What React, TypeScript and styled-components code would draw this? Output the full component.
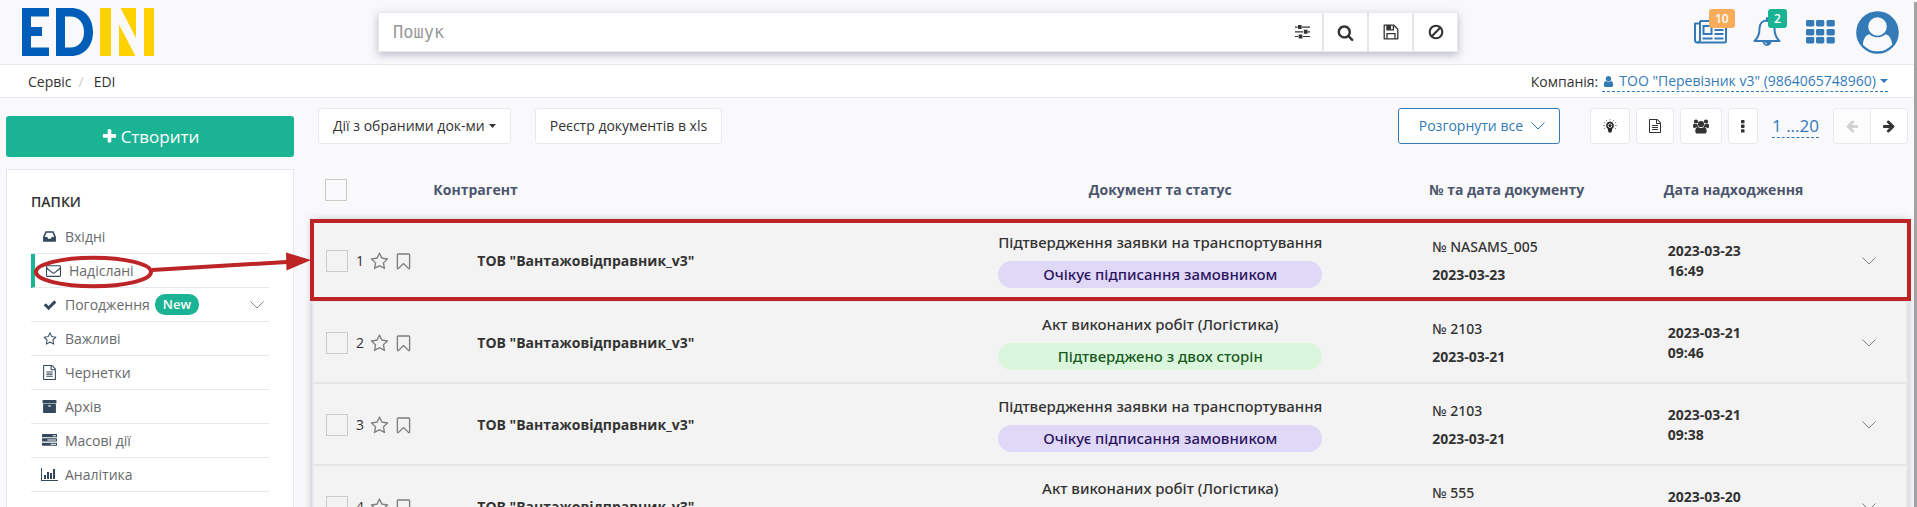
import React from "react";
import styled, { createGlobalStyle, css } from "styled-components";

const GlobalStyle = createGlobalStyle`
  * { box-sizing: border-box; }
  body {
    margin: 0;
    background: #f9f9fb;
    color: #333;
    font-family: "Open Sans", "Noto Sans", sans-serif;
    font-size: 14px;
    line-height: 20px;
  }
  button, input { font: inherit; color: inherit; }
`;

const BLUE = "#337ab7";
const GREEN = "#1ab394";
const LINE = "#e7e9ed";
const RED = "#bd2426";

/* ---------- icons ---------- */

const faPaths = {
  plus: "M1600 736v192q0 40-28 68t-68 28h-416v416q0 40-28 68t-68 28h-192q-40 0-68-28t-28-68v-416h-416q-40 0-68-28t-28-68v-192q0-40 28-68t68-28h416v-416q0-40 28-68t68-28h192q40 0 68 28t28 68v416h416q40 0 68 28t28 68z",
  star: "M1201 1004l306-297-422-62-189-382-189 382-422 62 306 297-73 421 378-199 377 199zm527-357q0 22-26 48l-363 354 86 500q1 7 1 20 0 50-41 50-19 0-40-12l-449-236-449 236q-22 12-40 12-21 0-31.5-14.5t-10.5-35.5q0-6 2-20l86-500-364-354q-25-27-25-48 0-37 56-46l502-73 225-455q19-41 49-41t49 41l225 455 502 73q56 9 56 46z",
  bookmark: "M1408 256h-1024v1242l423-406 89-85 89 85 423 406v-1242zm12-128q23 0 44 9 33 13 52.5 41t19.5 62v1289q0 34-19.5 62t-52.5 41q-19 8-44 8-48 0-83-32l-441-424-441 424q-36 33-83 33-23 0-44-9-33-13-52.5-41t-19.5-62v-1289q0-34 19.5-62t52.5-41q21-9 44-9h1048z",
  inbox: "M1151 960h316q-1-3-2.5-8t-2.5-8l-212-496h-708l-212 496q-1 2-2.5 8t-2.5 8h316l95 192h320zm513 30v482q0 26-19 45t-45 19h-1408q-26 0-45-19t-19-45v-482q0-62 25-123l238-552q10-25 36.5-42t52.5-17h832q26 0 52.5 17t36.5 42l238 552q25 61 25 123z",
  envelope: "M1664 1504v-768q-32 36-69 66-268 206-426 338-51 43-83 67t-86.5 48.5-102.5 24.5h-2q-48 0-102.5-24.5t-86.5-48.5-83-67q-158-132-426-338-37-30-69-66v768q0 13 9.5 22.5t22.5 9.5h1472q13 0 22.5-9.5t9.5-22.5zm0-1051v-24.5l-.5-13-3-12.5-5.5-9-9-7.5-14-2.5h-1472q-13 0-22.5 9.5t-9.5 22.5q0 168 147 284 193 152 401 317 6 5 35 29.5t46 37.5 44.5 31.5 50.5 27.5 43 9h2q20 0 43-9t50.5-27.5 44.5-31.5 46-37.5 35-29.5q208-165 401-317 54-43 100.5-115.5t46.5-131.5zm128-37v1088q0 66-47 113t-113 47h-1472q-66 0-113-47t-47-113v-1088q0-66 47-113t113-47h1472q66 0 113 47t47 113z",
  check: "M1671 566q0 40-28 68l-724 724-136 136q-28 28-68 28t-68-28l-136-136-362-362q-28-28-28-68t28-68l136-136q28-28 68-28t68 28l294 295 656-657q28-28 68-28t68 28l136 136q28 28 28 68z",
  file: "M1596 380q28 28 48 76t20 88v1152q0 40-28 68t-68 28h-1344q-40 0-68-28t-28-68v-1600q0-40 28-68t68-28h896q40 0 88 20t76 48zm-444-244v376h376q-10-29-22-41l-313-313q-12-12-41-22zm384 1528v-1024h-416q-40 0-68-28t-28-68v-416h-768v1536h1280zm-1024-864q0-14 9-23t23-9h704q14 0 23 9t9 23v64q0 14-9 23t-23 9h-704q-14 0-23-9t-9-23v-64zm736 224q14 0 23 9t9 23v64q0 14-9 23t-23 9h-704q-14 0-23-9t-9-23v-64q0-14 9-23t23-9h704zm0 256q14 0 23 9t9 23v64q0 14-9 23t-23 9h-704q-14 0-23-9t-9-23v-64q0-14 9-23t23-9h704z",
  archive: "M1088 832q0-26-19-45t-45-19h-256q-26 0-45 19t-19 45 19 45 45 19h256q26 0 45-19t19-45zm576-192v960q0 26-19 45t-45 19h-1408q-26 0-45-19t-19-45v-960q0-26 19-45t45-19h1408q26 0 45 19t19 45zm64-448v256q0 26-19 45t-45 19h-1536q-26 0-45-19t-19-45v-256q0-26 19-45t45-19h1536q26 0 45 19t19 45z",
  tasks: "M1024 1408h640v-128h-640v128zm-384-512h1024v-128h-1024v128zm640-512h384v-128h-384v128zm512 832v256q0 26-19 45t-45 19h-1664q-26 0-45-19t-19-45v-256q0-26 19-45t45-19h1664q26 0 45 19t19 45zm0-512v256q0 26-19 45t-45 19h-1664q-26 0-45-19t-19-45v-256q0-26 19-45t45-19h1664q26 0 45 19t19 45zm0-512v256q0 26-19 45t-45 19h-1664q-26 0-45-19t-19-45v-256q0-26 19-45t45-19h1664q26 0 45 19t19 45z",
  search: "M1216 832q0-185-131.5-316.5t-316.5-131.5-316.5 131.5-131.5 316.5 131.5 316.5 316.5 131.5 316.5-131.5 131.5-316.5zm512 832q0 52-38 90t-90 38q-54 0-90-38l-343-342q-179 124-399 124-143 0-273.5-55.5t-225-150-150-225-55.5-273.5 55.5-273.5 150-225 225-150 273.5-55.5 273.5 55.5 225 150 150 225 55.5 273.5q0 220-124 399l343 343q37 37 37 90z",
  user: "M1536 1399q0 109-62.5 187t-150.5 78h-854q-88 0-150.5-78t-62.5-187q0-85 8.5-160.5t31.5-152 58.5-131 94-89 134.5-34.5q131 128 313 128t313-128q76 0 134.5 34.5t94 89 58.5 131 31.5 152 8.5 160.5zm-256-887q0 159-112.5 271.5t-271.5 112.5-271.5-112.5-112.5-271.5 112.5-271.5 271.5-112.5 271.5 112.5 112.5 271.5z",
  arrow: "M1600 960q0 54-37 91l-651 651q-39 37-91 37-51 0-90-37l-75-75q-38-38-38-91t38-91l293-293h-704q-52 0-84.5-37.5t-32.5-90.5v-128q0-53 32.5-90.5t84.5-37.5h704l-293-294q-38-36-38-90t38-90l75-75q38-38 90-38 53 0 91 38l651 651q37 35 37 90z",
};

type FaName = keyof typeof faPaths;

function Fa({ name, size = 14, flip = false }: { name: FaName; size?: number; flip?: boolean }) {
  return (
    <svg width={size} height={size} viewBox="0 0 1792 1792" fill="currentColor" aria-hidden="true">
      <path d={faPaths[name]} transform={flip ? "translate(1792 0) scale(-1 1)" : undefined} />
    </svg>
  );
}

function ChartIcon() {
  return (
    <svg width="17" height="13" viewBox="0 0 17 13" fill="currentColor" aria-hidden="true">
      <path d="M0 0h1v12h16v1H0zM3 7h2v4H3zM6 4h2v7H6zM9 5h2v6H9zM12 1h2v10h-2z" />
    </svg>
  );
}

function SlidersIcon() {
  return (
    <svg width="16" height="14" viewBox="0 0 16 14" fill="currentColor" aria-hidden="true">
      <path d="M0 1.5h2.5v1.2H0zM7 1.5h8v1.2H7zM3 0h3.6v4H3zM0 6.2h8v1.2H0zM13 6.2h2v1.2h-2zM8.8 4.8h3.8v4H8.8zM0 10.9h3v1.2H0zM8 10.9h7v1.2H8zM3.6 9.5h3.8v4H3.6z" />
    </svg>
  );
}

function SaveIcon() {
  return (
    <svg width="16" height="16" viewBox="0 0 16 16" fill="none" stroke="currentColor" strokeWidth="1.3" aria-hidden="true">
      <path d="M1.2 1.2h9.6l4 4v9.6H1.2z" strokeLinejoin="round" />
      <path d="M4 1.2v4.6h6.4V1.2M4 14.8V9.7h8v5.1" />
      <path d="M4.4 1.6h3v3.6h-3z" fill="currentColor" />
    </svg>
  );
}

function BanIcon() {
  return (
    <svg width="16" height="16" viewBox="0 0 16 16" fill="none" stroke="currentColor" strokeWidth="2.1" aria-hidden="true">
      <circle cx="8" cy="8" r="6.3" />
      <path d="M12.4 3.6L3.6 12.4" />
    </svg>
  );
}

function NewsIcon() {
  return (
    <svg width="34" height="24" viewBox="0 0 34 24" fill="none" stroke="currentColor" strokeWidth="2" aria-hidden="true">
      <path d="M6 1h26v20a1.5 1.5 0 0 1-1.5 1.5H3.5A2.500 2.500 0 0 1 1 20V3.500h5" strokeLinejoin="round" />
      <path d="M6 1v19a2.400 2.400 0 0 1-2.500 2.400" />
      <path d="M9.500 6h8v8h-8zM20.500 10h9M20.500 14h9M8.500 18.500h10M20.500 18.500h9M20.500 5.500h9" />
    </svg>
  );
}

function BellIcon() {
  return (
    <svg width="28" height="30" viewBox="0 0 28 30" fill="none" stroke="currentColor" strokeWidth="2" aria-hidden="true">
      <path d="M14 3.500c-5 0-7.500 3.500-7.500 8 0 6-1.500 9.500-5 12.500h25c-3.500-3-5-6.500-5-12.500 0-4.500-2.500-8-7.500-8z" strokeLinejoin="round" />
      <path d="M14 1v3" strokeLinecap="round" />
      <path d="M9.500 24a4.500 5 0 0 0 9 0z" fill="currentColor" stroke="none" />
      <path d="M11.800 25a2.300 2.300 0 0 0 2.200 2" stroke="#f9f9fb" strokeWidth="0.7" />
    </svg>
  );
}

function GridIcon() {
  return (
    <svg width="29" height="24" viewBox="0 0 29 24" fill="currentColor" aria-hidden="true">
      {[0, 9, 17].map((y) =>
        [0, 10, 20.5].map((x) => <rect key={`${x}-${y}`} x={x} y={y} width="8.3" height="6.4" rx="1.4" />)
      )}
    </svg>
  );
}

function AvatarIcon() {
  return (
    <svg width="43" height="43" viewBox="0 0 43 43" aria-hidden="true">
      <circle cx="21.5" cy="21.5" r="21.3" fill="currentColor" />
      <path d="M6.800 33.500c.7-5.800 3-9.700 6.700-10.300 4.700 4.200 11.300 4.200 16 0 3.700.6 6 4.500 6.700 10.300A18.800 18.800 0 0 1 21.500 40.300 18.800 18.800 0 0 1 6.800 33.500z" fill="#f9f9fb" />
      <circle cx="21.5" cy="15.5" r="9.3" fill="#f9f9fb" />
    </svg>
  );
}

function BulbIcon() {
  return (
    <svg width="14" height="15" viewBox="0 0 14 15" aria-hidden="true">
      <path d="M7 2.600a4 4 0 0 0-2.300 7.200L5.600 13.500h2.800l.9-3.700A4 4 0 0 0 7 2.600z" fill="#222" />
      <circle cx="7" cy="6.6" r="1.9" fill="none" stroke="#fff" strokeWidth=".8" />
      <path d="M7 0v1.400M3.200 1l.8 1.300M10.800 1L10 2.300M.2 6.500h1.800M12 6.500h1.800M.8 3.300l1.400.8M13.200 3.300l-1.400.8M1 9.800l1.300-.8M13 9.800L11.700 9" stroke="#777" strokeWidth=".9" />
    </svg>
  );
}

function UsersIcon() {
  return (
    <svg width="16" height="15" viewBox="0 0 16 15" fill="currentColor" aria-hidden="true">
      <circle cx="3" cy="2.5" r="2.1" />
      <circle cx="13" cy="2.5" r="2.1" />
      <circle cx="8" cy="5" r="3.1" />
      <path d="M0 7.500c0-1.800.5-2.900 1.400-2.900 1 .7 2 .8 2.900.5.1 1.200.5 2.100 1.200 2.800H3.200c-.6.400-1 .8-1.300 1.300C.8 9.100 0 8.500 0 7.500zM16 7.500c0-1.800-.5-2.900-1.400-2.900-1 .7-2 .8-2.900.5-.1 1.200-.5 2.100-1.200 2.800h2.300c.6.400 1 .8 1.300 1.300 1.100-.1 1.900-.7 1.900-1.700z" />
      <path d="M2.300 12.500C2.300 9.500 3.300 8 5 8c1.900 1.200 4.100 1.200 6 0 1.700 0 2.700 1.500 2.700 4.500 0 1.300-.8 2.100-2 2.100H4.300c-1.200 0-2-.8-2-2.100z" />
    </svg>
  );
}

function DotsIcon() {
  return (
    <svg width="4" height="13" viewBox="0 0 4 13" fill="currentColor" aria-hidden="true">
      <rect width="3.5" height="3.3" rx=".6" />
      <rect y="4.6" width="3.5" height="3.3" rx=".6" />
      <rect y="9.2" width="3.5" height="3.3" rx=".6" />
    </svg>
  );
}

function Chevron() {
  return (
    <svg width="14" height="8" viewBox="0 0 14 8" fill="none" stroke="currentColor" strokeWidth="1" aria-hidden="true">
      <path d="M.5.5L7 7 13.500.5" />
    </svg>
  );
}

function Caret({ width = 8 }: { width?: number }) {
  return (
    <svg width={width} height="4" viewBox="0 0 8 4" preserveAspectRatio="none" fill="currentColor" aria-hidden="true">
      <path d="M0 0h8L4 4z" />
    </svg>
  );
}

function Logo() {
  return (
    <svg width="133" height="48" viewBox="0 0 133 48" role="img" aria-label="EDIN">
      <g fill="#005eb8">
        <path d="M0 0h27v8.500H9V19h11v9H9v11.500h18V48H0z" />
        <path fillRule="evenodd" d="M34 0h15c13.500 0 22 10 22 24S62.500 48 49 48H34zm9 8.500v31h5.500C56.500 39.500 62 33.500 62 24S56.500 8.500 48.500 8.500z" />
      </g>
      <path fill="#ffd200" d="M78 0h11v48H78zM98.500 0H114v30zM97 16.500L113.500 48H97zM122 0h10v48h-10z" />
    </svg>
  );
}

/* ---------- header ---------- */

const Page = styled.div`
  position: relative;
  height: 100vh;
  overflow: hidden;
`;

const ScrollThumb = styled.div`
  position: absolute;
  top: 2px;
  right: 0;
  bottom: 0;
  width: 3px;
  background: #a3a3a3;
`;

const Header = styled.header`
  display: flex;
  align-items: flex-start;
  height: 65px;
  border-bottom: 1px solid ${LINE};
`;

const Brand = styled.a`
  flex: 0 0 378px;
  padding: 8px 0 0 22px;
`;

const SearchBox = styled.form`
  display: flex;
  flex: 1;
  height: 40px;
  margin-top: 12px;
  background: #fff;
  border: 1px solid ${LINE};
  box-shadow: 0 3px 8px rgba(90, 95, 130, 0.4);
`;

const SearchInput = styled.input`
  flex: 1;
  min-width: 0;
  padding: 0 14px;
  border: 0;
  outline: 0;
  background: transparent;
  font-family: "DejaVu Sans Mono", "Liberation Mono", monospace;
  font-size: 17px;
  &::placeholder { color: #999; opacity: 1; }
`;

const SearchButton = styled.button<{ $plain?: boolean }>`
  display: flex;
  align-items: center;
  justify-content: center;
  width: ${(p) => (p.$plain ? 38 : 45)}px;
  padding: 0;
  border: 0;
  border-left: ${(p) => (p.$plain ? "0" : "2px solid #e5e6e7")};
  background: transparent;
`;

const HeaderActions = styled.nav`
  display: flex;
  justify-content: flex-end;
  align-items: center;
  flex: 0 0 459px;
  height: 64px;
  gap: 25px;
  padding-right: 18px;
  color: ${BLUE};
`;

const HeaderButton = styled.button`
  position: relative;
  display: flex;
  padding: 0;
  border: 0;
  background: none;
  color: inherit;
  &:last-child { margin-left: -4px; }
`;

const CountBadge = styled.span<{ $tone: string; $top: number }>`
  position: absolute;
  top: ${(p) => p.$top}px;
  left: 15px;
  padding: 0 6px;
  border-radius: 3px;
  background: ${(p) => p.$tone};
  color: #fff;
  font-size: 12px;
  font-weight: 600;
  line-height: 19px;
`;

const CrumbBar = styled.div`
  display: flex;
  justify-content: space-between;
  align-items: center;
  height: 33px;
  padding: 1px 29px 0 28px;
  border-bottom: 1px solid ${LINE};
  background: #fff;
`;

const Crumbs = styled.nav`
  display: flex;
  gap: 7px;
  a { color: inherit; text-decoration: none; }
  span { color: #ccc; }
  a:last-child { margin-left: 3px; }
`;

const Company = styled.div`
  display: flex;
  gap: 4px;
`;

const CompanyLink = styled.button`
  display: flex;
  align-items: center;
  gap: 4px;
  padding: 0;
  border: 0;
  border-bottom: 1px dashed ${BLUE};
  background: none;
  color: ${BLUE};
  line-height: 18px;
`;

/* ---------- sidebar ---------- */

const Body = styled.div`
  display: flex;
  gap: 18px;
  padding: 10px 9px 0 6px;
`;

const Sidebar = styled.aside`
  flex: 0 0 288px;
  padding-top: 8px;
`;

const CreateButton = styled.button`
  display: flex;
  align-items: center;
  justify-content: center;
  gap: 3px;
  width: 100%;
  height: 41px;
  border: 0;
  border-radius: 3px;
  background: ${GREEN};
  color: #fff;
  font-size: 17px;
`;

const Panel = styled.section`
  margin-top: 12px;
  padding: 22px 24px 40px;
  border: 1px solid #e4e5ef;
  background: #fff;
`;

const PanelTitle = styled.h2`
  margin: 0 0 8px;
  font-size: 14px;
  font-weight: 600;
  line-height: 20px;
`;

const FolderList = styled.ul`
  margin: 0;
  padding: 0;
  list-style: none;
`;

const Folder = styled.li<{ $active?: boolean }>`
  border-bottom: 1px solid ${LINE};
  ${(p) => p.$active && css`border-left: 4px solid ${GREEN};`}
`;

const FolderLink = styled.a`
  display: flex;
  align-items: center;
  height: 33px;
  padding: 0 5px 0 10px;
  color: #676a6c;
  text-decoration: none;
`;

const FolderIcon = styled.span`
  display: flex;
  justify-content: center;
  width: 17px;
  margin-right: 7px;
  color: #34495e;
`;

const NewBadge = styled.span`
  margin-left: 5px;
  padding: 0 8px;
  border-radius: 10px;
  background: ${GREEN};
  color: #fff;
  font-size: 13px;
  font-weight: 600;
  line-height: 21px;
`;

const FolderChevron = styled.span`
  display: flex;
  margin-left: auto;
  color: #7c8593;
`;

/* ---------- main ---------- */

const Main = styled.main`
  flex: 1;
  min-width: 0;
`;

const Toolbar = styled.div`
  display: flex;
  justify-content: space-between;
  padding-left: 6px;
`;

const ToolGroup = styled.div<{ $gap: number }>`
  display: flex;
  align-items: center;
  gap: ${(p) => p.$gap}px;
`;

const ToolButton = styled.button<{ $pad?: number }>`
  display: flex;
  align-items: center;
  justify-content: center;
  gap: 4px;
  height: 36px;
  padding: 0 ${(p) => p.$pad ?? 12}px;
  border: 1px solid ${LINE};
  border-radius: 3px;
  background: #fff;
  color: #333;
  &:disabled { background: #fcfcfd; color: #d2d2d2; }
`;

const ExpandButton = styled(ToolButton)`
  gap: 8px;
  padding: 0 14px 0 20px;
  border-color: ${BLUE};
  color: ${BLUE};
`;

const IconTools = styled(ToolGroup)`
  margin-left: 30px;
`;

const RangeButton = styled.button`
  margin: 0 14px;
  padding: 0;
  border: 0;
  border-bottom: 1px dashed ${BLUE};
  background: none;
  color: ${BLUE};
  font-size: 17px;
  line-height: 22px;
`;

const Pager = styled.div`
  display: flex;
  button:first-child { border-radius: 3px 0 0 3px; }
  button:last-child { margin-left: -1px; border-radius: 0 3px 3px 0; }
`;

const TableWrap = styled.div`
  position: relative;
  margin-top: 16px;
`;

const Table = styled.table`
  width: 100%;
  table-layout: fixed;
  border-collapse: separate;
  border-spacing: 0;
  tbody { box-shadow: 0 0 8px rgba(90, 95, 130, 0.4); }
`;

const HeadCell = styled.th<{ $center?: boolean }>`
  height: 60px;
  padding: 0 8px;
  color: #4c556e;
  font-weight: 700;
  text-align: ${(p) => (p.$center ? "center" : "left")};
  &:first-child { padding-left: 13px; }
`;

const Cell = styled.td<{ $indent?: number; $center?: boolean }>`
  height: 82px;
  padding: ${(p) => (p.$center ? 0 : 2)}px 0 0 ${(p) => p.$indent ?? 0}px;
  border-bottom: 2px solid #e6e6e6;
  background: #f3f3f3;
  text-align: ${(p) => (p.$center ? "center" : "left")};
  &:first-child { border-left: 2px solid ${LINE}; }
  &:last-child { border-right: 2px solid ${LINE}; }
`;

const Tick = styled.input`
  appearance: none;
  display: block;
  width: 22px;
  height: 22px;
  margin: 0;
  border: 1px solid #cfcbc4;
  background: transparent;
`;

const RowTools = styled.div`
  display: flex;
  align-items: center;
  gap: 5px;
`;

const RowNumber = styled.span`
  width: 9px;
  margin-left: 3px;
`;

const RowIcon = styled.button`
  display: flex;
  padding: 0;
  border: 0;
  background: none;
  color: #7d7f82;
`;

const DocName = styled.div`
  font-family: "Noto Sans", "Open Sans", sans-serif;
  font-size: 15px;
  font-weight: 500;
`;

const Status = styled(DocName)<{ $done: boolean }>`
  width: 62%;
  margin: 9px auto 0;
  border-radius: 14px;
  background: ${(p) => (p.$done ? "#daf7dd" : "#dfd8f7")};
  color: ${(p) => (p.$done ? "#1b5a24" : "#2d1560")};
  line-height: 27px;
`;

const DocNumber = styled.div`
  margin-bottom: 8px;
  font-family: "Noto Sans", "Open Sans", sans-serif;
  font-weight: 500;
`;

/* ---------- annotations over the page ---------- */

const RowFrame = styled.div`
  position: absolute;
  top: 59px;
  left: -2px;
  right: -3px;
  height: 82px;
  border: 4px solid ${RED};
  pointer-events: none;
`;

const Callout = styled.svg`
  position: absolute;
  top: 250px;
  left: 32px;
  pointer-events: none;
`;

const folders: { label: string; icon: React.ReactNode; active?: boolean; fresh?: boolean }[] = [
  { label: "Вхідні", icon: <Fa name="inbox" size={15} /> },
  { label: "Надіслані", icon: <Fa name="envelope" size={15} />, active: true },
  { label: "Погодження", icon: <Fa name="check" />, fresh: true },
  { label: "Важливі", icon: <Fa name="star" /> },
  { label: "Чернетки", icon: <Fa name="file" size={15} /> },
  { label: "Архів", icon: <Fa name="archive" size={15} /> },
  { label: "Масові дії", icon: <Fa name="tasks" size={15} /> },
  { label: "Аналітика", icon: <ChartIcon /> },
];

const WAITING = { doc: "Підтвердження заявки на транспортування", status: "Очікує підписання замовником", done: false };
const CONFIRMED = { doc: "Акт виконаних робіт (Логістика)", status: "Підтверджено з двох сторін", done: true };

const documents = [
  { ...WAITING, number: "NASAMS_005", date: "2023-03-23", time: "16:49" },
  { ...CONFIRMED, number: "2103", date: "2023-03-21", time: "09:46" },
  { ...WAITING, number: "2103", date: "2023-03-21", time: "09:38" },
  { ...CONFIRMED, number: "555", date: "2023-03-20", time: "15:12" },
];

export default function App() {
  return (
    <Page>
      <GlobalStyle />
      <Header>
        <Brand href="#"><Logo /></Brand>
        <SearchBox role="search">
          <SearchInput type="text" placeholder="Пошук" aria-label="Пошук" />
          <SearchButton type="button" $plain aria-label="Фільтри"><SlidersIcon /></SearchButton>
          <SearchButton type="button" aria-label="Знайти"><Fa name="search" size={17} /></SearchButton>
          <SearchButton type="button" aria-label="Зберегти"><SaveIcon /></SearchButton>
          <SearchButton type="button" aria-label="Очистити"><BanIcon /></SearchButton>
        </SearchBox>
        <HeaderActions>
          <HeaderButton aria-label="Новини">
            <NewsIcon />
            <CountBadge $tone="#f8ac59" $top={-11}>10</CountBadge>
          </HeaderButton>
          <HeaderButton aria-label="Сповіщення">
            <BellIcon />
            <CountBadge $tone={GREEN} $top={-8}>2</CountBadge>
          </HeaderButton>
          <HeaderButton aria-label="Сервіси"><GridIcon /></HeaderButton>
          <HeaderButton aria-label="Профіль"><AvatarIcon /></HeaderButton>
        </HeaderActions>
      </Header>

      <CrumbBar>
        <Crumbs>
          <a href="#">Сервіс</a>
          <span>/</span>
          <a href="#">EDI</a>
        </Crumbs>
        <Company>
          Компанія:
          <CompanyLink>
            <Fa name="user" size={13} />
            ТОО "Перевізник v3" (9864065748960)
            <Caret />
          </CompanyLink>
        </Company>
      </CrumbBar>

      <Body>
        <Sidebar>
          <CreateButton><Fa name="plus" size={17} />Створити</CreateButton>
          <Panel>
            <PanelTitle>ПАПКИ</PanelTitle>
            <FolderList>
              {folders.map((f) => (
                <Folder key={f.label} $active={f.active}>
                  <FolderLink href="#">
                    <FolderIcon>{f.icon}</FolderIcon>
                    {f.label}
                    {f.fresh && <NewBadge>New</NewBadge>}
                    {f.fresh && <FolderChevron><Chevron /></FolderChevron>}
                  </FolderLink>
                </Folder>
              ))}
            </FolderList>
          </Panel>
        </Sidebar>

        <Main>
          <Toolbar>
            <ToolGroup $gap={24}>
              <ToolButton $pad={14}>Дії з обраними док-ми<Caret width={7} /></ToolButton>
              <ToolButton $pad={14}>Реєстр документів в xls</ToolButton>
            </ToolGroup>
            <ToolGroup $gap={0}>
              <ExpandButton>Розгорнути все<Chevron /></ExpandButton>
              <IconTools $gap={6}>
                <ToolButton aria-label="Підказки"><BulbIcon /></ToolButton>
                <ToolButton aria-label="Шаблони" $pad={11}><Fa name="file" /></ToolButton>
                <ToolButton aria-label="Користувачі"><UsersIcon /></ToolButton>
                <ToolButton aria-label="Ще"><DotsIcon /></ToolButton>
              </IconTools>
              <RangeButton>1 ...20</RangeButton>
              <Pager>
                <ToolButton disabled aria-label="Назад" $pad={11}><Fa name="arrow" flip /></ToolButton>
                <ToolButton aria-label="Вперед" $pad={11}><Fa name="arrow" /></ToolButton>
              </Pager>
            </ToolGroup>
          </Toolbar>

          <TableWrap>
            <Table>
              <colgroup>
                <col style={{ width: "7.1%" }} />
                <col style={{ width: "29.7%" }} />
                <col style={{ width: "32.7%" }} />
                <col style={{ width: "14.7%" }} />
                <col style={{ width: "12%" }} />
                <col />
              </colgroup>
              <thead>
                <tr>
                  <HeadCell><Tick type="checkbox" aria-label="Обрати всі" /></HeadCell>
                  <HeadCell>Контрагент</HeadCell>
                  <HeadCell $center>Документ та статус</HeadCell>
                  <HeadCell>№ та дата документу</HeadCell>
                  <HeadCell>Дата надходження</HeadCell>
                  <HeadCell />
                </tr>
              </thead>
              <tbody>
                {documents.map((d, i) => (
                  <tr key={i}>
                    <Cell $indent={12}>
                      <RowTools>
                        <Tick type="checkbox" aria-label={`Обрати документ ${i + 1}`} />
                        <RowNumber>{i + 1}</RowNumber>
                        <RowIcon aria-label="Важливий"><Fa name="star" size={19} /></RowIcon>
                        <RowIcon aria-label="Закладка"><Fa name="bookmark" size={19} /></RowIcon>
                      </RowTools>
                    </Cell>
                    <Cell $indent={52}><b>ТОВ "Вантажовідправник_v3"</b></Cell>
                    <Cell $center>
                      <DocName>{d.doc}</DocName>
                      <Status $done={d.done}>{d.status}</Status>
                    </Cell>
                    <Cell $indent={11}>
                      <DocNumber>№ {d.number}</DocNumber>
                      <b>{d.date}</b>
                    </Cell>
                    <Cell $indent={12}><b>{d.date}<br />{d.time}</b></Cell>
                    <Cell $indent={15}>
                      <RowIcon aria-label="Розгорнути"><Chevron /></RowIcon>
                    </Cell>
                  </tr>
                ))}
              </tbody>
            </Table>
            <RowFrame />
          </TableWrap>
        </Main>
      </Body>

      <Callout width="281" height="42" viewBox="0 0 281 42" aria-hidden="true">
        <ellipse cx="61.5" cy="22" rx="57.5" ry="14.3" fill="none" stroke={RED} strokeWidth="4" />
        <path d="M120 20l135-8" stroke={RED} strokeWidth="4" fill="none" />
        <path d="M254 2.500L279 10l-24.500 10.500z" fill={RED} />
      </Callout>
      <ScrollThumb />
    </Page>
  );
}
